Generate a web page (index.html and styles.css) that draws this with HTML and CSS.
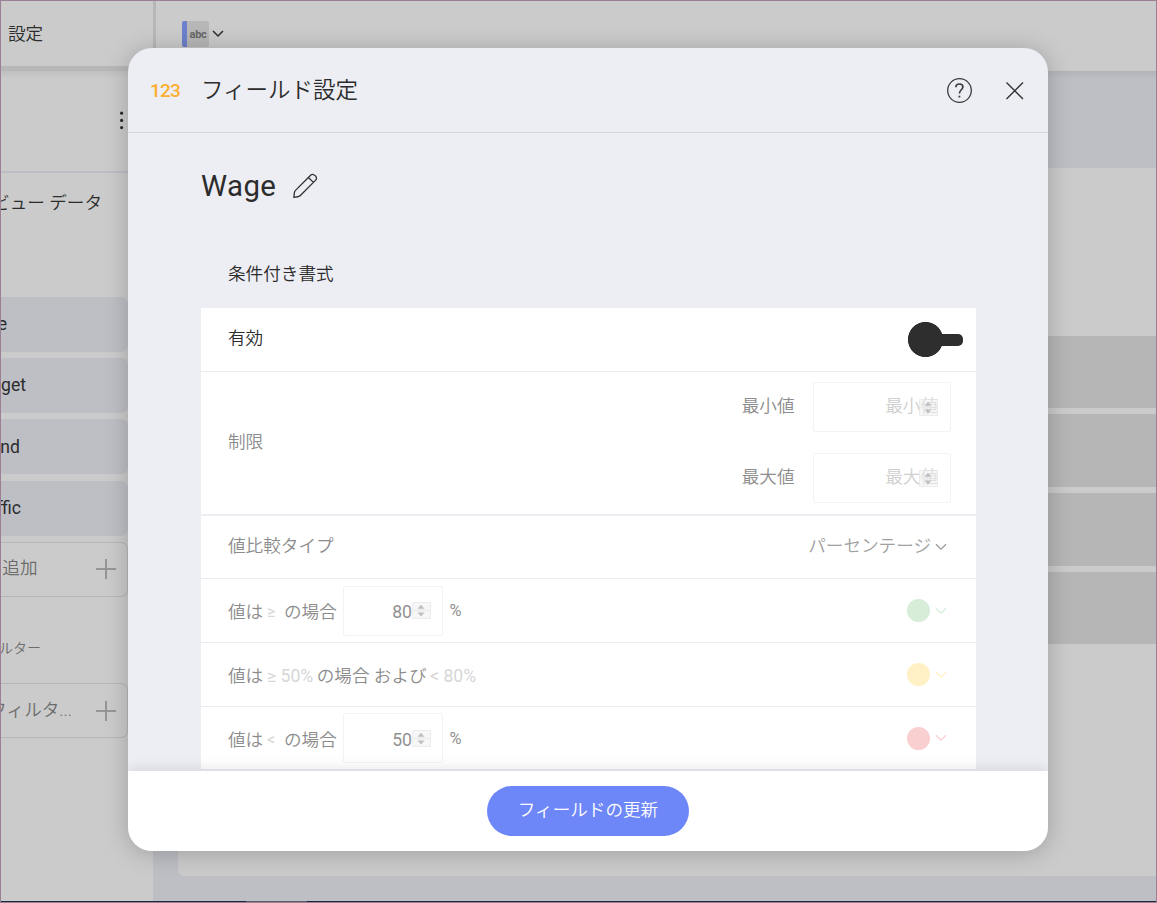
FILE: index.html
```html
<!DOCTYPE html>
<html lang="ja">
<head>
<meta charset="utf-8">
<title>フィールド設定</title>
<link rel="stylesheet" href="styles.css">
</head>
<body>
<div class="app">
  <aside class="side">
    <div class="side-head">設定</div>
    <div class="side-menu"><svg width="6" height="20" viewBox="0 0 6 20"><circle cx="2.6" cy="2.2" r="1.6"/><circle cx="2.6" cy="9.4" r="1.6"/><circle cx="2.6" cy="16.6" r="1.6"/></svg></div>
    <div class="side-title"><span>ビュー データ</span></div>
    <div class="pills">
      <div class="pill"><span class="w6">e</span></div>
      <div class="pill"><span class="w25">get</span></div>
      <div class="pill low"><span class="w18">nd</span></div>
      <div class="pill"><span class="w20">ffic</span></div>
      <div class="add"><span class="w37">の追加</span><svg width="20" height="20" viewBox="0 0 20 20"><path d="M10 0V20M0 10H20"/></svg></div>
    </div>
    <div class="side-label"><span>ィルター</span></div>
    <div class="add second"><span class="w71">フィルタ...</span><svg width="20" height="20" viewBox="0 0 20 20"><path d="M10 0V20M0 10H20"/></svg></div>
  </aside>
  <main class="main">
    <div class="topbar">
      <div class="chip">abc</div>
      <svg width="12" height="8" viewBox="0 0 12 8"><path d="M1 1L6 6L11 1"/></svg>
    </div>
    <div class="canvas">
      <div class="sheet">
        <div class="bar"></div><div class="bar tall"></div><div class="bar tall"></div><div class="bar"></div>
      </div>
    </div>
  </main>
</div>
<div class="strip"><i></i></div>

<section class="modal">
  <header class="head">
    <span class="type">123</span>
    <h1>フィールド設定</h1>
    <svg class="help" width="26" height="26" viewBox="0 0 26 26"><circle cx="12.5" cy="12.5" r="11.8"/><path class="q" d="M8.9 9.3C8.9 7.1 10.4 6 12.5 6C14.6 6 15.9 7.2 15.9 9.1C15.9 11.6 12.4 12.1 12.4 15.5"/><rect x="11.5" y="17.7" width="1.8" height="1.8"/></svg>
    <svg class="close" width="18" height="18" viewBox="0 0 18 18"><path d="M.5 .5L17 17M17 .5L.5 17"/></svg>
  </header>
  <div class="body">
    <div class="name"><span>Wage</span>
      <svg width="26" height="26" viewBox="0 0 26 26"><path d="M1.8 24.4L2.5 19.2Q2.7 18.2 3.5 17.4L18.6 2.3Q19.8 1.2 21.2 1.5Q24.2 2.4 24.5 5Q24.6 6.2 23.7 7.1L8.6 22.3Q7.8 23.1 6.8 23.5ZM16.4 4.5L21.4 9.4"/></svg>
    </div>
    <div class="section">条件付き書式</div>
    <div class="card">
      <div class="row r1"><span>有効</span><div class="toggle"></div></div>
      <div class="row r2"><span class="dim">制限</span>
        <div class="limits">
          <div class="limit"><span class="dim">最小値</span><div class="field ph"><span>最小値</span><svg class="spin" width="19" height="17" viewBox="0 0 19 17"><use href="#sp"/></svg></div></div>
          <div class="limit"><span class="dim">最大値</span><div class="field ph"><span>最大値</span><svg class="spin" width="19" height="17" viewBox="0 0 19 17"><use href="#sp"/></svg></div></div>
        </div>
      </div>
      <div class="row r3"><span class="dim">値比較タイプ</span><div class="select"><span>パーセンテージ</span><svg class="chev" width="12" height="8" viewBox="0 0 12 8"><path d="M1 1.2L6 6.2L11 1.2"/></svg></div></div>
      <div class="row r4"><span class="dim lead">値は</span><span class="op">≥</span><span class="dim case">の場合</span>
        <div class="field num"><span>80</span><svg width="19" height="17" viewBox="0 0 19 17"><g id="sp"><path class="sb" d="M.5 .5H18.5V8H.5ZM.5 8.8H18.5V16.5H.5Z"/><path class="sa" d="M9 2.8L12.5 6.8H5.5ZM9 14.6L12.5 10.6H5.5Z"/></g></svg></div>
        <span class="pct">%</span><div class="swatch green"><i></i><svg class="chev" width="12" height="8" viewBox="0 0 12 8"><path d="M1 1.2L6 6.2L11 1.2"/></svg></div></div>
      <div class="row r5"><span class="dim lead">値は</span><span class="op">≥ 50%</span><span class="dim mid">の場合 および</span><span class="op">&lt; 80%</span>
        <div class="swatch yellow"><i></i><svg class="chev" width="12" height="8" viewBox="0 0 12 8"><path d="M1 1.2L6 6.2L11 1.2"/></svg></div></div>
      <div class="row r4 last"><span class="dim lead">値は</span><span class="op">&lt;</span><span class="dim case">の場合</span>
        <div class="field num"><span>50</span><svg width="19" height="17" viewBox="0 0 19 17"><use href="#sp"/></svg></div>
        <span class="pct">%</span><div class="swatch red"><i></i><svg class="chev" width="12" height="8" viewBox="0 0 12 8"><path d="M1 1.2L6 6.2L11 1.2"/></svg></div></div>
    </div>
  </div>
  <footer class="foot"><button>フィールドの更新</button></footer>
</section>
<div class="frame"></div>
</body>
</html>
```

FILE: styles.css
```css
*{box-sizing:border-box}
body{margin:0;width:1157px;height:903px;position:relative;overflow:hidden;background:#bdbfc5;color:#2c2c2c;
  font:350 17.6px/24px Roboto,"Noto Sans CJK JP",sans-serif}
svg{display:block;flex:none;fill:none}
h1{margin:0}
.frame{position:absolute;inset:0;border:1px solid #9b8095;pointer-events:none}
.strip{position:absolute;left:0;bottom:1px;width:100%;height:1px;background:#1e2838;padding-left:246px}
.strip i{display:block;width:61px;height:1px;background:#5a5e68}
.app{display:flex;height:901px;padding-left:1px}

.side{width:152px;background:#cbcbcb;overflow:hidden;white-space:nowrap;padding-right:25px;flex:none}
.side-head{height:71px;margin-right:-25px;border-bottom:5px solid #b7b7b7;padding:22px 0 0 7px}
.side-menu{height:102px;margin-right:-25px;border-bottom:2px solid #bdbdc5;padding:40px 0 0 118px;
  background:linear-gradient(#c0c0c0,#cbcbcb 8px)}
.side-menu svg{fill:#2c2c2c}
.side-title{height:124px;padding-top:18px;display:flex}
.side-title span{width:101px;display:flex;justify-content:flex-end}
.pills{display:flex;flex-direction:column;gap:6.2px;height:301px}
.pill,.add{height:55px;flex:none;display:flex;align-items:center;border-radius:0 7px 7px 0;background:#bdbfc5}
.pill{font-weight:400;padding-bottom:1px}
.low{padding-bottom:0}
.pill span,.add span{display:flex;justify-content:flex-end}
.w6{width:6px}.w25{width:25px}.w18{width:19px}.w20{width:20px}.w37{width:37px}.w71{width:71px}
.add{background:none;border:1px solid #b7b7b7;border-left:0;justify-content:space-between;padding:0 11px 1px 0;color:#6c6c6c}
.w37{letter-spacing:.3px}
.add span{padding-bottom:1px}
.second{padding-bottom:0}
.add svg{stroke:#959595;stroke-width:2}
.side-label{height:85px;padding-top:38px;font-size:14px;color:#6c6c6c;display:flex}
.side-label span{width:40px;display:flex;justify-content:flex-end}

.main{flex:1;display:flex;flex-direction:column;min-width:0}
.topbar{height:71px;background:#cbcbcb;border-left:3px solid #b7b7b7;display:flex;padding:21px 0 0 26px;gap:3px}
.topbar svg{margin-top:9px;stroke:#2c2c2c;stroke-width:1.5}
.chip{width:27px;height:26px;border-left:5px solid #6c80cd;background:#b7b7b7;border-radius:2px;font:700 11px/27px Roboto,sans-serif;letter-spacing:-.3px;color:#666;text-align:center}
.canvas{flex:1;padding:97px 0 25px 25px;background:linear-gradient(#b1b3b9,#bdbfc5 8px);display:flex}
.sheet{flex:1;background:#cbcbcb;border-radius:0 0 0 7px;padding-top:168px;display:flex;flex-direction:column;gap:6px}
.bar{height:72px;background:#b6b6b6}
.tall{height:73px}

.modal{position:absolute;left:128px;top:48px;width:920px;height:803px;border-radius:24px;overflow:hidden;background:#edeef4;
  display:flex;flex-direction:column;box-shadow:0 2px 24px rgba(0,0,0,.22)}
.head{height:85px;border-bottom:1px solid #d3d5d9;display:flex;align-items:center;padding:1px 24px 0 22px;flex:none}
.type{width:51px;font:500 19px/24px Roboto,sans-serif;color:#fcaf2e;letter-spacing:-.8px;padding-top:1px}
.head h1{font-weight:350;font-size:22.5px;line-height:30px;flex:1;padding-bottom:2px}
.help{stroke:#3a3a3e;stroke-width:1.3;margin-right:33px}
.help .q{stroke-width:1.7}
.help rect{fill:#3a3a3e;stroke:none}
.close{stroke:#333;stroke-width:1.4}
.body{flex:1;padding:0 72px 0 73px;min-height:0}
.name{height:106px;display:flex;align-items:center;gap:16px;font:400 29.4px/36px Roboto,sans-serif}
.name span{letter-spacing:.4px}
.name svg{stroke:#333;stroke-width:1.3;stroke-linejoin:round}
.section{height:69px;padding:23px 0 0 27px}
.card{background:#fff}
.row{height:64px;border-bottom:1px solid #eaebf3;display:flex;align-items:center;padding:0 29px 0 27px}
.r1{padding-right:13px;border-color:#ededed}
.r1 span,.r3 span,.limit>span{padding-bottom:3px}
.r2>span{padding-bottom:1px}
.toggle{margin-left:auto;width:55px;height:35px;background:radial-gradient(circle at 17.5px 17.5px,#2e2e2e 17.2px,transparent 17.9px),linear-gradient(#2e2e2e,#2e2e2e) 20px 12px/29px 12px no-repeat;display:flex;align-items:center;justify-content:flex-end}
.toggle::after{content:"";width:20px;height:12px;border-radius:5px;background:#2e2e2e}
.dim{color:#8c8c8c}
.r2{height:144px;border-bottom:2px solid #edeef4;padding-right:25px;padding-bottom:1px;justify-content:space-between}
.limits{display:flex;flex-direction:column;gap:21px}
.limit{display:flex;align-items:center;gap:18.5px}
.field{width:138px;height:50px;border:1px solid #f3f3f3;border-radius:2px;display:flex;align-items:center;justify-content:flex-end;padding-right:12px;color:#cfcfcf}
.field.ph span{margin-right:-19px;padding-bottom:3px}
.sb{fill:#f0f0f0;fill-opacity:.5;stroke:#e6e6e6;stroke-opacity:.7;stroke-width:1}
.sa{fill:#bfbfbf}
.spin{margin-top:1px}
.r3{height:63px;justify-content:space-between}
.select{display:flex;align-items:center;gap:4px;color:#a0a0a0}
.chev{stroke-width:1.3;stroke:#999}
.lead{width:39px}
.op{color:#d6d6d6;font-weight:400;white-space:pre}
.r4 .op{width:17px;font-size:16px}
.case{width:58.5px}
.field.num{width:100px;padding-right:10.5px;font-weight:400;color:#919191}
.r4>span:not(.pct),.field.num span{padding-top:2px}
.r5>span{padding-top:2px}
.last>span:not(.pct),.last .field.num span{padding-top:3px}
.pct{margin-left:7px;color:#919191;font-weight:400;font-size:16.4px}
.last .pct{padding-top:1px}
.mid{margin:0 3.5px}
.swatch{margin-left:auto;display:flex;align-items:center;gap:5px}
.swatch i{width:23px;height:23px;border-radius:50%;background:currentColor}
.swatch .chev{stroke:currentColor}
.green{color:#d7edd8}.yellow{color:#fff0c6}.red{color:#facfd0}
.last{border:0;height:62px}
.foot{height:80px;background:#fff;box-shadow:0 -1px 14px rgba(0,0,0,.12);display:flex;justify-content:center;padding-top:15px;flex:none;position:relative}
.foot button{width:202px;height:50px;border:0;border-radius:25px;background:#6e87f8;color:#fff;font:inherit;padding:0 0 3px}
```
